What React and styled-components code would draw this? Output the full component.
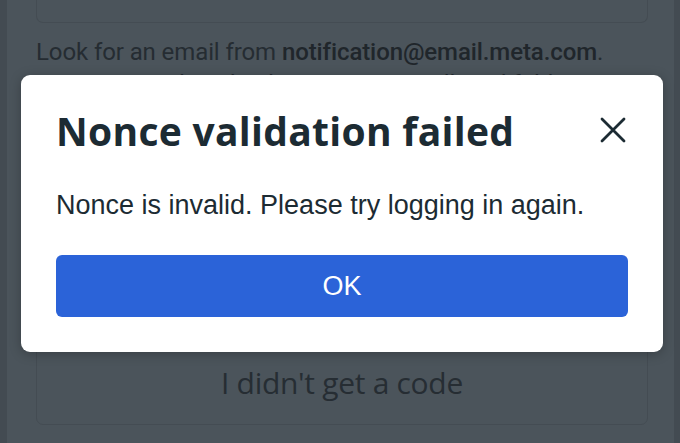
import React from 'react'
import styled, { createGlobalStyle } from 'styled-components'

const GlobalStyle = createGlobalStyle`
  html, body {
    margin: 0;
    padding: 0;
    background: #434b52;
    overflow: hidden;
  }
`

const Page = styled.div`
  width: 680px;
  height: 443px;
  box-sizing: border-box;
  padding: 0 6px 0 7px;
  position: relative;
`

const Sheet = styled.main`
  height: 100%;
  background: #4b545b;
  padding: 0 26px 0 29px;
  display: flex;
  flex-direction: column;
  font-family: "Open Sans", Roboto, sans-serif;
  color: #252c32;
`

const CodeBox = styled.div`
  height: 23px;
  border: 1px solid #444c53;
  border-top: none;
  border-radius: 0 0 7px 7px;
  box-sizing: border-box;
`

const Hint = styled.p`
  margin: 13px 0 0;
  font-family: Roboto, "Open Sans", sans-serif;
  font-size: 24px;
  line-height: 32px;
  letter-spacing: -0.1px;
  white-space: nowrap;

  strong {
    font-weight: 500;
    color: #20262b;
  }
`

const ResendBox = styled.div`
  margin-top: auto;
  margin-bottom: 18px;
  height: 90px;
  border: 1px solid #444c53;
  border-radius: 7px;
  box-sizing: border-box;
  display: flex;
  align-items: center;
  justify-content: center;
  padding-top: 4px;
  font-size: 30px;
  letter-spacing: -0.3px;
  color: #262d33;
`

const Dialog = styled.div`
  position: absolute;
  left: 21px;
  top: 75px;
  width: 642px;
  height: 277px;
  box-sizing: border-box;
  background: #ffffff;
  border-radius: 9px;
  box-shadow: 0 2px 12px rgba(0, 0, 0, 0.25);
  padding: 24px 35px 35px 35px;
  display: flex;
  flex-direction: column;
`

const Header = styled.div`
  display: flex;
  align-items: center;
  justify-content: space-between;
  height: 62px;
`

const Title = styled.h2`
  margin: 0;
  font-family: "Open Sans", sans-serif;
  font-size: 39px;
  font-weight: 700;
  letter-spacing: 0.3px;
  color: #1c2b33;
`

const Close = styled.button`
  border: none;
  background: none;
  padding: 0;
  width: 30px;
  height: 30px;
  display: flex;
  align-items: center;
  justify-content: center;
`

const Message = styled.p`
  margin: 27px 0 0;
  font-family: "Liberation Sans", Arial, sans-serif;
  font-size: 27px;
  line-height: 34px;
  color: #1c2b33;
`

const OkButton = styled.button`
  margin-top: auto;
  height: 62px;
  width: 100%;
  border: none;
  border-radius: 6px;
  background: #2b63d8;
  color: #ffffff;
  font-family: "Liberation Sans", Arial, sans-serif;
  font-size: 27px;
`

export default function App() {
  return (
    <>
      <GlobalStyle />
      <Page>
        <Sheet>
          <CodeBox />
          <Hint>
            Look for an email from <strong>notification@email.meta.com</strong>.
            <br />
            You may need to check your spam or all mail folder.
          </Hint>
          <ResendBox>I didn't get a code</ResendBox>
        </Sheet>
        <Dialog role="dialog">
          <Header>
            <Title>Nonce validation failed</Title>
            <Close aria-label="Close">
              <svg width="26" height="26" viewBox="0 0 26 26">
                <path d="M2 2 L24 24 M24 2 L2 24" stroke="#1c2b33" strokeWidth="2.8" strokeLinecap="round" />
              </svg>
            </Close>
          </Header>
          <Message>Nonce is invalid. Please try logging in again.</Message>
          <OkButton>OK</OkButton>
        </Dialog>
      </Page>
    </>
  )
}
